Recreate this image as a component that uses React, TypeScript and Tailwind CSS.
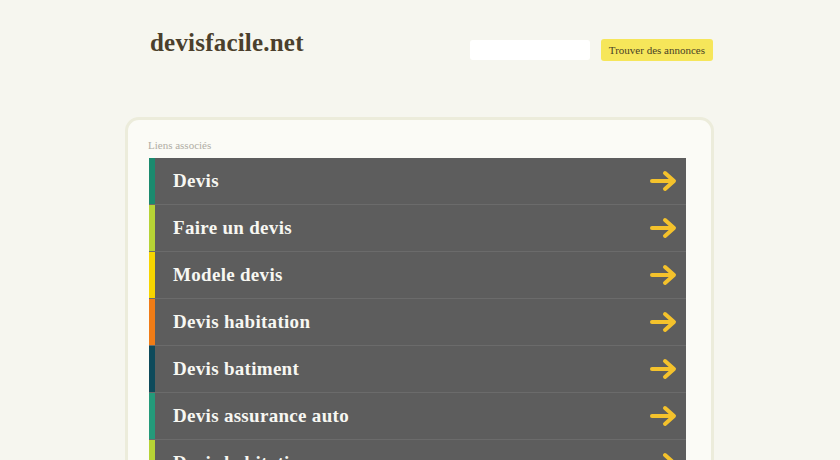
const links = [
  { label: 'Devis', color: 'bg-[#1b8a6e]' },
  { label: 'Faire un devis', color: 'bg-[#b6d335]' },
  { label: 'Modele devis', color: 'bg-[#f6d500]' },
  { label: 'Devis habitation', color: 'bg-[#f07c16]' },
  { label: 'Devis batiment', color: 'bg-[#0e4a5b]' },
  { label: 'Devis assurance auto', color: 'bg-[#249a7a]' },
  { label: 'Devis habitation', color: 'bg-[#b6d335]' },
];

function Arrow() {
  return (
    <svg width="28" height="22" viewBox="0 0 28 22" fill="none">
      <path d="M2 11 H23" stroke="#f4c22c" strokeWidth="4" strokeLinecap="round" />
      <path d="M15 3 L24 11 L15 19" stroke="#f4c22c" strokeWidth="4" strokeLinecap="round" strokeLinejoin="round" />
    </svg>
  );
}

export default function App() {
  return (
    <div className="h-[460px] overflow-hidden bg-[#f6f6ef] font-['Liberation_Serif',serif]">
      <div className="ml-[125px] w-[589px]">
        <div className="flex items-start justify-between pt-[24px] pl-[25px] pr-[1px]">
          <div className="text-[25px] font-bold tracking-[0.2px] text-[#4b3f2c]">devisfacile.net</div>
          <div className="mt-[15px] flex items-center gap-[11px]">
            <div className="h-[20px] w-[120px] rounded-[3px] bg-white" />
            <button className="h-[22px] rounded-[3px] bg-[#f6e65a] px-[8px] text-[11px] text-[#4a4226]">
              Trouver des annonces
            </button>
          </div>
        </div>
        <div className="mt-[55px] rounded-[14px] border-[3px] border-[#ececdb] bg-[#fbfbf6] pl-[21px] pr-[25px] pt-[19px]">
          <div className="mb-[6px] ml-[-1px] text-[11px] leading-[13px] text-[#b0ada4]">Liens associés</div>
          <div className="flex flex-col">
            {links.map((l, i) => (
              <div key={i} className="flex h-[47px] border-b border-[#6b6b6b] bg-[#5d5d5d]">
                <div className={`w-[6px] ${l.color}`} />
                <div className="flex flex-1 items-center justify-between pl-[18px] pr-[8px]">
                  <span className="pt-[2px] text-[19px] font-bold tracking-[0.3px] text-[#f7f7f2]">{l.label}</span>
                  <Arrow />
                </div>
              </div>
            ))}
          </div>
        </div>
      </div>
    </div>
  );
}
